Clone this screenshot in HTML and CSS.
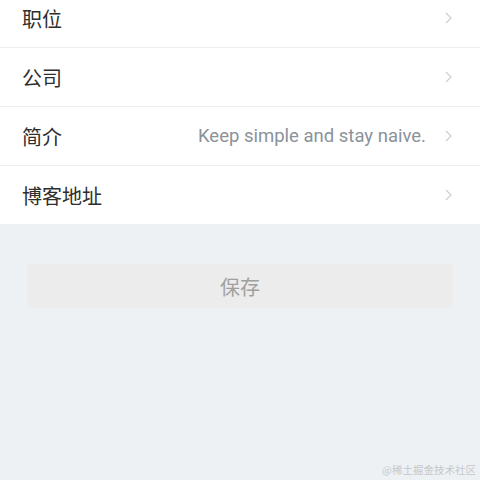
FILE: index.html
```html
<!DOCTYPE html>
<html lang="zh-CN">
<head>
    <meta charset="UTF-8">
    <meta name="viewport" content="width=device-width, initial-scale=1.0">
    <title>编辑资料</title>
    <link rel="stylesheet" href="styles.css">
</head>
<body>
    <div class="page">
        <ul class="list">
            <li class="item">
                <span class="label">职位</span>
                <span class="value"></span>
                <svg class="arrow" viewBox="0 0 7 12"><polyline points="1,1 6,6 1,11"/></svg>
            </li>
            <li class="item">
                <span class="label">公司</span>
                <span class="value"></span>
                <svg class="arrow" viewBox="0 0 7 12"><polyline points="1,1 6,6 1,11"/></svg>
            </li>
            <li class="item">
                <span class="label">简介</span>
                <span class="value">Keep simple and stay naive.</span>
                <svg class="arrow" viewBox="0 0 7 12"><polyline points="1,1 6,6 1,11"/></svg>
            </li>
            <li class="item">
                <span class="label">博客地址</span>
                <span class="value"></span>
                <svg class="arrow" viewBox="0 0 7 12"><polyline points="1,1 6,6 1,11"/></svg>
            </li>
        </ul>

        <div class="actions">
            <button type="button" class="save" disabled>保存</button>
        </div>

        <div class="watermark">@稀土掘金技术社区</div>
    </div>
</body>
</html>
```

FILE: styles.css
```css
html, body {
    margin: 0;
    padding: 0;
    height: 100%;
    overflow: hidden;
}
body {
    font-family: Roboto, "Noto Sans CJK SC", sans-serif;
    background-color: #eef1f4;
    color: #333;
}
.page {
    position: relative;
    display: flow-root;
    height: 100%;
}
.list {
    list-style: none;
    margin: -11px 0 0 0;
    padding: 0;
    background-color: #fff;
}
.item {
    display: flex;
    align-items: center;
    height: 58px;
    padding: 0 28px 0 22px;
    border-bottom: 1px solid #efefef;
}
.item:last-child {
    border-bottom: none;
}
.label {
    font-size: 20px;
    color: #2e2e2e;
}
.value {
    flex: 1;
    text-align: right;
    font-size: 18.5px;
    color: #8a929a;
    margin-right: 19px;
}
.arrow {
    width: 7px;
    height: 12px;
    fill: none;
    stroke: #cdd0d4;
    stroke-width: 1.3;
}
.actions {
    padding: 40px 27px 0 27px;
}
.save {
    display: block;
    width: 100%;
    height: 44px;
    border: none;
    border-radius: 4px;
    background-color: #ececec;
    color: #a0a0a0;
    font-family: "Noto Sans CJK SC", sans-serif;
    font-size: 20px;
}
.watermark {
    position: absolute;
    right: 4px;
    bottom: 3px;
    font-family: "Noto Sans CJK SC", serif;
    font-size: 10.5px;
    color: #c4c8cc;
}
```
